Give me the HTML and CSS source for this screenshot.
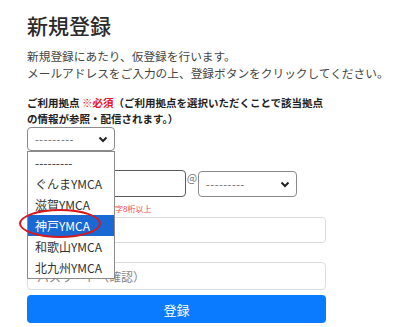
FILE: index.html
```html
<!DOCTYPE html>
<html lang="ja">
<head>
<meta charset="utf-8">
<link rel="stylesheet" href="styles.css">
</head>
<body>
<div class="page">
  <h1 class="title">新規登録</h1>
  <p class="intro">新規登録にあたり、仮登録を行います。<br>メールアドレスをご入力の上、登録ボタンをクリックしてください。</p>
  <form class="form">
    <div class="field-label">ご利用拠点 <span class="req">※必須</span>（ご利用拠点を選択いただくことで該当拠点の情報が参照・配信されます。）</div>
    <div class="base-select">
      <div class="select select-small">
        <span class="select-text">---------</span>
        <svg class="chev" width="10" height="7" viewBox="0 0 10 7"><path d="M1.5 1.5 L5 5 L8.5 1.5" fill="none" stroke="#222" stroke-width="2"/></svg>
      </div>
      <ul class="dropdown">
        <li class="opt">---------</li>
        <li class="opt">ぐんまYMCA</li>
        <li class="opt">滋賀YMCA</li>
        <li class="opt opt-active">神戸YMCA</li>
        <li class="opt">和歌山YMCA</li>
        <li class="opt">北九州YMCA</li>
        <li class="mark"></li>
      </ul>
    </div>
    <div class="email-row">
      <div class="input input-dark"></div>
      <span class="at">@</span>
      <div class="select select-domain">
        <span class="select-text">---------</span>
        <svg class="chev" width="10" height="7" viewBox="0 0 10 7"><path d="M1.5 1.5 L5 5 L8.5 1.5" fill="none" stroke="#222" stroke-width="2"/></svg>
      </div>
    </div>
    <div class="hint">※パスワードは半角英数字8桁以上</div>
    <div class="input input-light"></div>
    <div class="input input-light input-confirm"><span class="placeholder">パスワード（確認）</span></div>
    <button type="button" class="submit">登録</button>
  </form>
</div>
</body>
</html>
```
FILE: styles.css
```css
* { box-sizing: border-box; }
body {
  margin: 0;
  background: #fff;
  color: #333;
  font-family: "Noto Sans CJK JP", "Noto Sans", sans-serif;
}
.page {
  padding: 12px 0 0 27px;
}
.title {
  margin: 0;
  font-size: 21px;
  line-height: 26px;
  font-weight: 500;
  color: #2b2b2b;
}
.intro {
  margin: 8.5px 0 0;
  font-size: 11.7px;
  line-height: 17px;
  color: #444;
  white-space: nowrap;
}
.form {
  width: 299px;
  margin-top: 14.5px;
}
.field-label {
  font-size: 10.5px;
  line-height: 16px;
  font-weight: 700;
  color: #222;
}
.req { color: #e8141e; }
.base-select {
  position: relative;
  width: 88px;
}
.select {
  display: flex;
  align-items: center;
  justify-content: space-between;
  border: 1px solid #8a8a8a;
  border-radius: 4px;
  background: #fff;
  padding: 0 6px 0 7px;
}
.select-small { height: 24px; width: 88px; }
.select-text {
  font-size: 11px;
  color: #666;
  letter-spacing: 0.5px;
}
.chev { display: block; }
.dropdown {
  position: absolute;
  top: 24px;
  left: 0;
  width: 88px;
  margin: 0;
  padding: 0;
  list-style: none;
  background: #fff;
  border: 1px solid #8a8a8a;
  z-index: 5;
}
.opt {
  height: 21px;
  line-height: 21px;
  padding-left: 7px;
  font-size: 12px;
  color: #333;
  white-space: nowrap;
}
.opt-active {
  background: #1a68d4;
  color: #fff;
}
.mark {
  position: absolute;
  left: -9px;
  top: 57px;
  width: 82px;
  height: 29px;
  border: 2px solid #d6191f;
  border-radius: 50%;
}
.email-row {
  display: flex;
  align-items: flex-start;
  margin-top: 19px;
}
.input {
  background: #fff;
  border-radius: 4px;
}
.input-dark {
  width: 159px;
  height: 27px;
  border: 1.5px solid #5a5a5a;
}
.at {
  width: 12px;
  font-size: 11px;
  line-height: 14px;
  color: #777;
  text-align: center;
}
.select-domain {
  width: 99px;
  height: 26px;
  margin-top: 1px;
}
.hint {
  margin-top: 6px;
  font-size: 8px;
  line-height: 12px;
  color: #f04848;
  white-space: nowrap;
}
.input-light {
  width: 299px;
  height: 26px;
  margin-top: 2px;
  border: 1px solid #dcdcdc;
}
.input-confirm {
  height: 28px;
  margin-top: 19px;
  display: flex;
  align-items: center;
  padding-left: 9px;
}
.placeholder {
  font-size: 12px;
  color: #888;
}
.submit {
  display: block;
  width: 299px;
  height: 28px;
  margin-top: 5px;
  border: none;
  border-radius: 4px;
  background: #0a7bff;
  color: #fff;
  font-family: inherit;
  font-size: 13px;
}
```
